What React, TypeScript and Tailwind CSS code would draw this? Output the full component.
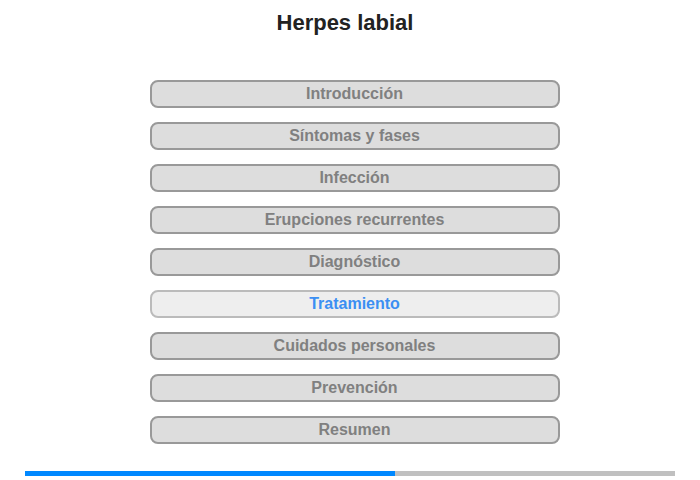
import React from "react";

const items = [
  "Introducción",
  "Síntomas y fases",
  "Infección",
  "Erupciones recurrentes",
  "Diagnóstico",
  "Tratamiento",
  "Cuidados personales",
  "Prevención",
  "Resumen",
];

export default function App() {
  return (
    <div className="w-[700px] h-[480px] bg-white flex flex-col items-center" style={{ fontFamily: '"Liberation Sans", Arial, sans-serif' }}>
      <h1 className="mt-[10px] mr-[10px] h-[26px] leading-[26px] text-[22px] font-bold text-[#222]">Herpes labial</h1>
      <div className="mt-[44px] ml-[9px] flex flex-col gap-[14px]">
        {items.map((t) => {
          const active = t === "Tratamiento";
          return (
            <div
              key={t}
              className={
                active
                  ? "w-[410px] h-[28px] rounded-[8px] border-2 border-[#bbbbbb] bg-[#eeeeee] flex items-center justify-center text-[16px] font-bold text-[#3b8ff3]"
                  : "w-[410px] h-[28px] rounded-[8px] border-2 border-[#999999] bg-[#dddddd] flex items-center justify-center text-[16px] font-bold text-[#808080]"
              }
            >
              {t}
            </div>
          );
        })}
      </div>
      <div className="mt-[27px] w-[650px] h-[5px] flex">
        <div className="w-[370px] h-full bg-[#0088ff]" />
        <div className="flex-1 h-full bg-[#c0c0c0]" />
      </div>
    </div>
  );
}
